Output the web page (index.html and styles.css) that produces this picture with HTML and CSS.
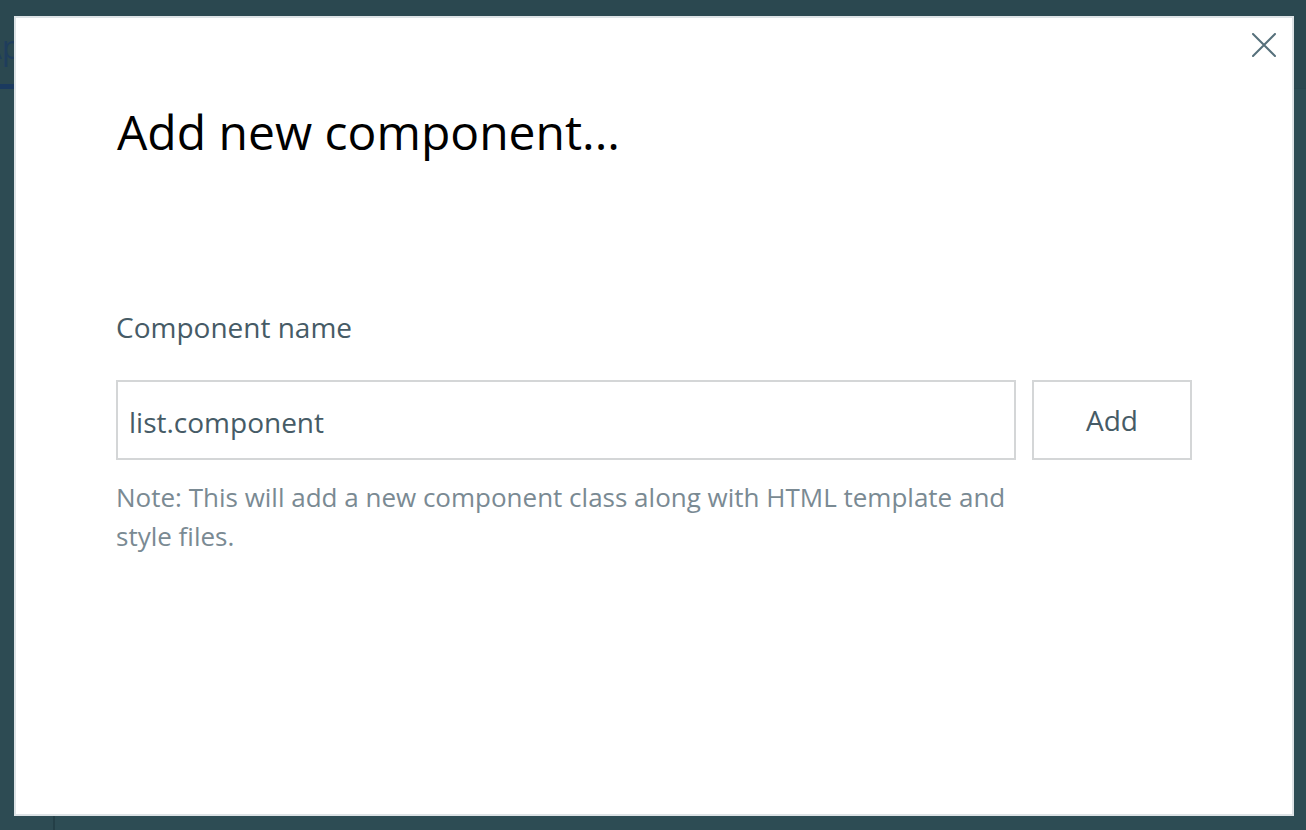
FILE: index.html
```html
<!DOCTYPE html>
<html lang="en">
<head>
<meta charset="utf-8">
<title>Add new component</title>
<link rel="stylesheet" href="styles.css">
</head>
<body>
  <div class="page">
    <header class="topbar">
      <nav class="tabs">
        <span class="tab tab-active">App</span>
        <span class="tab">Files</span>
      </nav>
    </header>
    <div class="workspace">
      <aside class="sidebar"></aside>
      <main class="content"></main>
    </div>
  </div>

  <div class="overlay">
    <div class="modal" role="dialog" aria-labelledby="modal-title">
      <button class="close-btn" type="button" aria-label="Close">
        <svg width="24" height="24" viewBox="0 0 24 24" aria-hidden="true">
          <path d="M1 1 L23 23 M23 1 L1 23" stroke="currentColor" stroke-width="2" stroke-linecap="round" fill="none"/>
        </svg>
      </button>
      <h1 class="modal-title" id="modal-title">Add new component...</h1>
      <label class="field-label" for="component-name">Component name</label>
      <div class="field-row">
        <input class="text-input" id="component-name" type="text" value="list.component">
        <button class="add-btn" type="button">Add</button>
      </div>
      <p class="note">Note: This will add a new component class along with HTML template and style files.</p>
    </div>
  </div>
</body>
</html>
```

FILE: styles.css
```css
* {
  box-sizing: border-box;
}

html, body {
  margin: 0;
  padding: 0;
  height: 100%;
}

body {
  font-family: "Open Sans", "Noto Sans", sans-serif;
  background: #2d4b53;
  overflow: hidden;
}

/* underlying page (dimmed) */
.page {
  height: 100%;
  display: flex;
  flex-direction: column;
}

.topbar {
  height: 89px;
  border-bottom: 1px solid #29464e;
  background: #2b4850;
}

.tabs {
  display: flex;
  height: 100%;
  margin-left: -19px;
}

.tab {
  display: flex;
  align-items: flex-start;
  padding-top: 24px;
  font-size: 33px;
  line-height: 45px;
  color: #1f3d5c;
  padding-right: 30px;
}

.tab-active {
  border-bottom: 5px solid #1b3a5f;
  height: 89px;
}

.workspace {
  flex: 1;
  display: flex;
}

.sidebar {
  width: 55px;
  border-right: 2px solid #243f47;
  background: #2d4b53;
}

.content {
  flex: 1;
  background: #2d4c54;
}

/* modal */
.overlay {
  position: fixed;
  inset: 0;
  display: flex;
  align-items: flex-start;
  justify-content: flex-start;
  padding: 16px 0 0 14px;
}

.modal {
  position: relative;
  width: 1280px;
  height: 800px;
  background: #ffffff;
  border: 2px solid #dde3e6;
  padding: 86px 100px 0 100px;
  display: flex;
  flex-direction: column;
  align-items: flex-start;
}

.close-btn {
  position: absolute;
  top: 7px;
  right: 8px;
  width: 40px;
  height: 40px;
  padding: 0;
  border: 0;
  background: transparent;
  color: #56707b;
  display: flex;
  align-items: center;
  justify-content: center;
  cursor: pointer;
}

.modal-title {
  margin: 0 0 0 1px;
  font-size: 48px;
  line-height: 56px;
  font-weight: 400;
  color: #000000;
}

.field-label {
  margin-top: 147px;
  font-size: 28px;
  line-height: 40px;
  color: #465b66;
}

.field-row {
  margin-top: 33px;
  display: flex;
  gap: 16px;
}

.text-input {
  width: 900px;
  height: 80px;
  border: 2px solid #d4d6d7;
  border-radius: 0;
  padding: 4px 10px 0 11px;
  font-family: inherit;
  font-size: 28px;
  color: #465b66;
  background: #ffffff;
  outline: none;
}

.add-btn {
  width: 160px;
  height: 80px;
  border: 2px solid #d4d6d7;
  border-radius: 0;
  background: #ffffff;
  font-family: inherit;
  font-size: 28px;
  color: #465b66;
  padding: 0;
}

.note {
  margin: 18px 0 0 0;
  width: 900px;
  font-size: 26px;
  line-height: 39px;
  color: #7a8a93;
}
```
